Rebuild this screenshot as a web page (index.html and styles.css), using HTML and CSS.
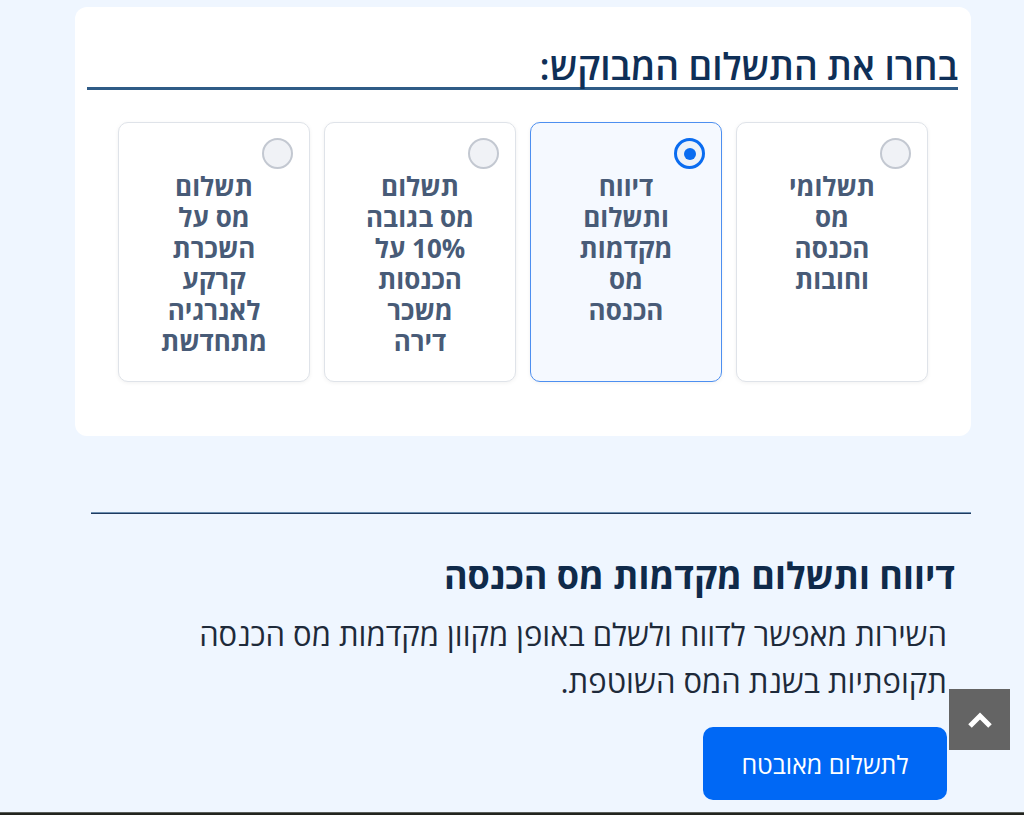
FILE: index.html
```html
<!DOCTYPE html>
<html lang="he" dir="rtl">
<head>
<meta charset="utf-8">
<title>תשלומים</title>
<link rel="stylesheet" href="styles.css">
</head>
<body>
<main class="page">
  <section class="choose-card">
    <h2 class="choose-title">בחרו את התשלום המבוקש:</h2>
    <div class="options">
      <label class="option">
        <span class="radio"></span>
        <span class="option-text">תשלומי מס הכנסה וחובות</span>
      </label>
      <label class="option selected">
        <span class="radio"></span>
        <span class="option-text">דיווח ותשלום מקדמות מס הכנסה</span>
      </label>
      <label class="option">
        <span class="radio"></span>
        <span class="option-text">תשלום מס בגובה 10% על הכנסות משכר דירה</span>
      </label>
      <label class="option">
        <span class="radio"></span>
        <span class="option-text">תשלום מס על השכרת קרקע לאנרגיה מתחדשת</span>
      </label>
    </div>
  </section>

  <section class="details">
    <hr class="divider">
    <h3 class="details-title">דיווח ותשלום מקדמות מס הכנסה</h3>
    <p class="details-text">השירות מאפשר לדווח ולשלם באופן מקוון מקדמות מס הכנסה תקופתיות בשנת המס השוטפת.</p>
    <a class="pay-btn" href="#">לתשלום מאובטח</a>
  </section>
</main>
<footer class="footer"></footer>
<a class="to-top" href="#" aria-label="חזרה למעלה">
  <svg width="26" height="18" viewBox="0 0 26 18"><path d="M3 15 L13 5 L23 15" fill="none" stroke="#fff" stroke-width="5"/></svg>
</a>
</body>
</html>
```
FILE: styles.css
```css
* { box-sizing: border-box; }
html, body { margin: 0; padding: 0; }
body {
  background: #eff6ff;
  font-family: "Open Sans", "DejaVu Sans", sans-serif;
  color: #1e2a3a;
}
.page {
  width: 896px;
  margin-right: 53px;
  padding-top: 7px;
}
.choose-card {
  background: #fff;
  border-radius: 12px;
  padding: 38px 13px 54px 12px;
}
.choose-title {
  margin: 0;
  font-size: 37px;
  font-weight: 600;
  color: #0f2f57;
  line-height: 42px;
  border-bottom: 3px solid #2f5b86;
}
.options {
  display: grid;
  grid-template-columns: repeat(4, 1fr);
  gap: 14px;
  padding: 0 30px 0 31px;
  margin-top: 32px;
}
.option {
  position: relative;
  height: 260px;
  background: #fff;
  border: 1px solid #dfe3e9;
  border-radius: 10px;
  box-shadow: 0 1px 4px rgba(0, 0, 0, 0.06);
  padding: 48px 38px 0;
  text-align: center;
}
.option.selected {
  background: #f5f9ff;
  border-color: #4d8ff0;
}
.option-text {
  display: block;
  font-size: 26px;
  font-weight: 700;
  line-height: 31px;
  color: #485b77;
}
.radio {
  position: absolute;
  top: 15px;
  right: 16px;
  width: 31px;
  height: 31px;
  border-radius: 50%;
  border: 2px solid #c3c8d1;
  background: #f0f2f6;
}
.option.selected .radio {
  border: 3px solid #0a6cf0;
  background: #eef2f8;
}
.option.selected .radio::after {
  content: "";
  position: absolute;
  top: 50%;
  left: 50%;
  width: 12px;
  height: 12px;
  margin: -6px 0 0 -6px;
  border-radius: 50%;
  background: #0a6cf0;
}
.details {
  padding: 76px 0 12px 16px;
}
.divider {
  margin: 0;
  border: 0;
  border-top: 1px solid #6d8fb0;
  border-bottom: 1px solid #1e3a5f;
  height: 0;
}
.details-title {
  margin: 40px 16px 0 0;
  font-size: 36px;
  font-weight: 700;
  line-height: 44px;
  color: #0f2a4a;
}
.details-text {
  margin: 13px 24px 0 0;
  font-size: 31px;
  line-height: 47px;
  color: #1e2a3a;
}
.pay-btn {
  display: flex;
  align-items: center;
  justify-content: center;
  width: 244px;
  height: 73px;
  margin: 22px 24px 0 0;
  background: #0068f5;
  color: #fff;
  border-radius: 10px;
  font-size: 25px;
  text-decoration: none;
}
.footer {
  height: 40px;
  background: #22241e;
  border-top: 1px solid #5a5e5a;
}
.to-top {
  position: fixed;
  right: 14px;
  bottom: 65px;
  width: 61px;
  height: 61px;
  background: #646464;
  display: flex;
  align-items: center;
  justify-content: center;
}
```
